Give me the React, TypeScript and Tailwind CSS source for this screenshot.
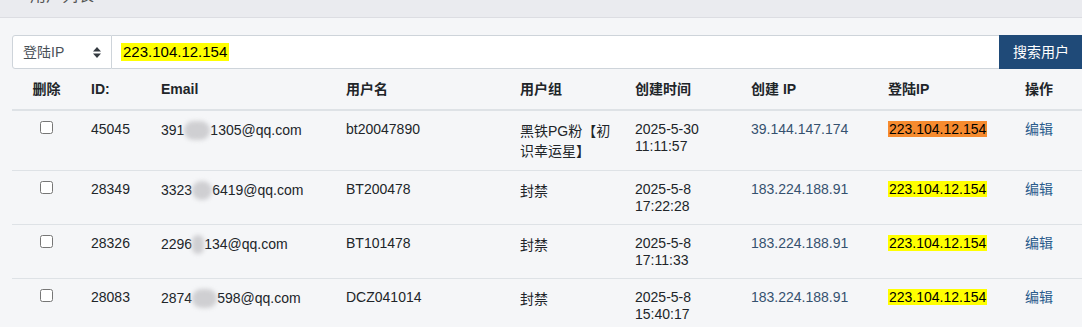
import React from 'react';

type Row = {
  id: string;
  emailPre: string;
  blurW: number;
  emailPost: string;
  name: string;
  group: string;
  date: string;
  time: string;
  createIp: string;
  loginIp: string;
  hot?: boolean;
};

const ROWS: Row[] = [
  { id: '45045', emailPre: '391', blurW: 26, emailPost: '1305@qq.com', name: 'bt20047890', group: '黑铁PG粉【初识幸运星】', date: '2025-5-30', time: '11:11:57', createIp: '39.144.147.174', loginIp: '223.104.12.154', hot: true },
  { id: '28349', emailPre: '3323', blurW: 20, emailPost: '6419@qq.com', name: 'BT200478', group: '封禁', date: '2025-5-8', time: '17:22:28', createIp: '183.224.188.91', loginIp: '223.104.12.154' },
  { id: '28326', emailPre: '2296', blurW: 12, emailPost: '134@qq.com', name: 'BT101478', group: '封禁', date: '2025-5-8', time: '17:11:33', createIp: '183.224.188.91', loginIp: '223.104.12.154' },
  { id: '28083', emailPre: '2874', blurW: 25, emailPost: '598@qq.com', name: 'DCZ041014', group: '封禁', date: '2025-5-8', time: '15:40:17', createIp: '183.224.188.91', loginIp: '223.104.12.154' },
];

const FONT = { fontFamily: '"Liberation Sans", Arial, "Noto Sans CJK SC", sans-serif' };

function SortIcon() {
  return (
    <svg width="8" height="11" viewBox="0 0 8 11" className="shrink-0">
      <path d="M4 0 L8 4.5 H0 Z" fill="#343a40" />
      <path d="M4 11 L8 6.5 H0 Z" fill="#343a40" />
    </svg>
  );
}

export default function App() {
  return (
    <div className="min-h-[327px] w-[1082px] overflow-hidden bg-[#f5f6f8] text-[14px] text-[#212529]" style={FONT}>
      {/* page title bar, scrolled off the top */}
      <div className="h-[18px] overflow-hidden border-b border-[#dcdde2] bg-[#eaebef] pl-[30px]">
        <div className="-mt-[14px] text-[16px] leading-[20px] text-[#555]">用户列表</div>
      </div>

      <div className="pl-[12px] pt-[17px]">
        {/* search bar */}
        <div className="flex h-[34px] w-[1075px]">
          <div className="flex w-[100px] shrink-0 items-center justify-between rounded-l-[3px] border border-[#ced4da] bg-white pl-[10px] pr-[10px] text-[#495057]">
            <span>登陆IP</span>
            <SortIcon />
          </div>
          <div className="flex flex-1 items-center border-y border-[#ced4da] bg-white pl-[9px]">
            <span className="bg-[#ffff00] px-[2px] text-[15px] leading-[18px] text-black">223.104.12.154</span>
          </div>
          <button className="w-[88px] shrink-0 bg-[#1f4a78] pl-[14px] text-left text-white">搜索用户</button>
        </div>

        <table className="w-[1075px] table-fixed border-collapse">
          <colgroup>
            <col className="w-[69px]" />
            <col className="w-[70px]" />
            <col className="w-[185px]" />
            <col className="w-[174px]" />
            <col className="w-[115px]" />
            <col className="w-[116px]" />
            <col className="w-[137px]" />
            <col className="w-[137px]" />
            <col className="w-[72px]" />
          </colgroup>
          <thead>
            <tr className="h-[41px] border-b-2 border-[#dee2e6] text-left font-bold">
              <th className="text-center font-bold">删除</th>
              <th className="pl-[10px] font-bold">ID:</th>
              <th className="pl-[10px] font-bold">Email</th>
              <th className="pl-[10px] font-bold">用户名</th>
              <th className="pl-[10px] font-bold">用户组</th>
              <th className="pl-[10px] font-bold">创建时间</th>
              <th className="pl-[10px] font-bold">创建 IP</th>
              <th className="pl-[10px] font-bold">登陆IP</th>
              <th className="pl-[10px] font-bold">操作</th>
            </tr>
          </thead>
          <tbody>
            {ROWS.map((r) => (
              <tr key={r.id} className="border-b border-[#dee2e6] align-top leading-[17px]">
                <td className="pb-[9px] pt-[10px] text-center">
                  <input type="checkbox" className="m-0 h-[13px] w-[13px] align-top" />
                </td>
                <td className="pb-[9px] pl-[10px] pt-[10px]">{r.id}</td>
                <td className="whitespace-nowrap pb-[9px] pl-[10px] pt-[10px]">
                  {r.emailPre}
                  <span
                    className="inline-block h-[19px] rounded-full bg-[#cfcfd2] align-[-5px] blur-[2px]"
                    style={{ width: r.blurW }}
                  />
                  {r.emailPost}
                </td>
                <td className="pb-[9px] pl-[10px] pt-[10px]">{r.name}</td>
                <td className="pb-[9px] pl-[10px] pr-[14px] pt-[10px] leading-[20px]">{r.group}</td>
                <td className="pb-[9px] pl-[10px] pt-[10px]">
                  {r.date}
                  <br />
                  {r.time}
                </td>
                <td className="pb-[9px] pl-[10px] pt-[10px] text-[#35516f]">{r.createIp}</td>
                <td className="pb-[9px] pl-[10px] pt-[10px]">
                  <span className={r.hot ? 'bg-[#f68b2f] px-[1px] text-black' : 'bg-[#ffff00] px-[1px] text-black'}>
                    {r.loginIp}
                  </span>
                </td>
                <td className="pb-[9px] pl-[10px] pt-[10px] text-[#2a5b8c]">编辑</td>
              </tr>
            ))}
          </tbody>
        </table>
      </div>
    </div>
  );
}
